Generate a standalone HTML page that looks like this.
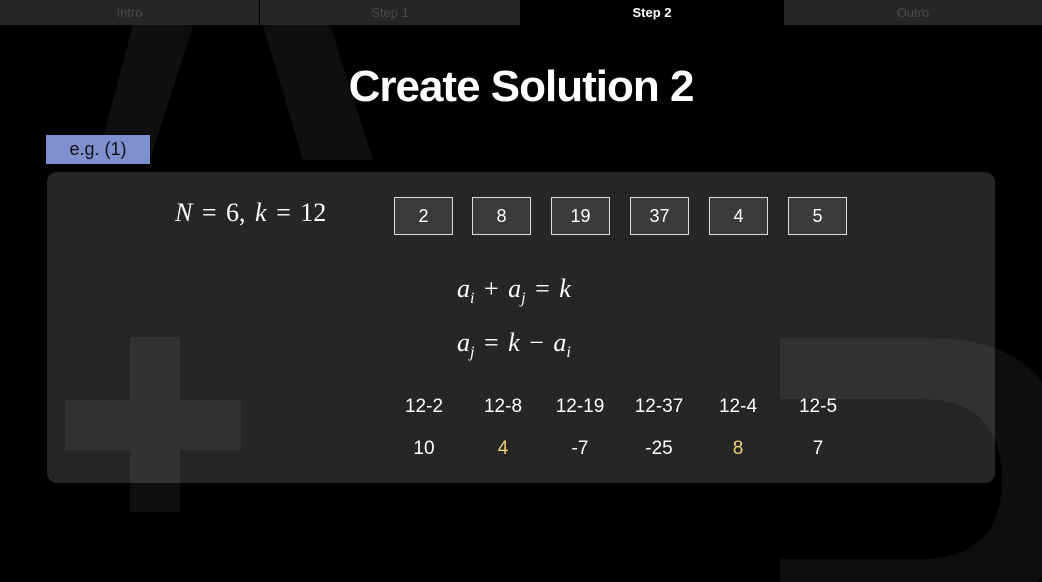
<!DOCTYPE html>
<html><head><style>
body{margin:0;width:1042px;height:582px;background:#000;overflow:hidden;position:relative;font-family:"Liberation Sans",sans-serif;color:#fff}
.a{position:absolute}
.tab{position:absolute;top:0;height:25px;line-height:25px;text-align:center;font-size:13px;color:#4a4a4a;background:#262626}
.box{position:absolute;top:197px;width:57px;height:36px;border:1.5px solid #ddd;background:#3b3b3b;text-align:center;line-height:36px;font-size:18px}
.n{position:absolute;width:60px;text-align:center;font-size:19px}
.m{font-family:"Liberation Serif",serif;font-style:italic;font-size:26px;position:absolute;word-spacing:3px}
</style></head><body>
<svg class="a" style="left:0;top:0" width="1042" height="582">
<polygon points="133,25 193,25 150,160 97,160" fill="#0f0f0f"/>
<polygon points="263,25 330,25 373,160 303,160" fill="#0f0f0f"/>
<rect x="130" y="337" width="50" height="175" fill="#0f0f0f"/>
<rect x="65" y="400" width="176" height="50" fill="#0f0f0f"/>
<path fill-rule="evenodd" fill="#0e0e0e" d="M780 338 H930 Q1070 338 1070 480 Q1070 620 930 620 H780 Z M780 399 H920 Q1002 399 1002 480 Q1002 559 920 559 H780 Z"/>
</svg>
<div class="tab" style="left:0;width:259px">Intro</div>
<div class="tab" style="left:260px;width:260px">Step 1</div>
<div class="tab" style="left:521px;width:262px;background:#000;color:#fff;font-weight:bold">Step 2</div>
<div class="tab" style="left:784px;width:258px">Outro</div>
<div class="a" style="left:0;top:62px;width:1042px;text-align:center;font-size:44px;font-weight:bold;letter-spacing:-1px">Create Solution 2</div>
<div class="a" style="left:46px;top:135px;width:104px;height:29px;background:#7f8fd0;color:#111;font-size:18px;text-align:center;line-height:29px">e.g. (1)</div>
<div class="a" style="left:47px;top:172px;width:948px;height:311px;background:rgba(255,255,255,0.15);border-radius:10px"></div>
<div class="m" style="left:175px;top:198px">N <span style="font-style:normal">= 6,</span> k <span style="font-style:normal">= 12</span></div>
<div class="box" style="left:394px">2</div>
<div class="box" style="left:472px">8</div>
<div class="box" style="left:551px">19</div>
<div class="box" style="left:630px">37</div>
<div class="box" style="left:709px">4</div>
<div class="box" style="left:788px">5</div>
<div class="m" style="left:457px;top:274px">a<sub style="font-size:16px">i</sub> <span style="font-style:normal">+</span> a<sub style="font-size:16px">j</sub> <span style="font-style:normal">=</span> k</div>
<div class="m" style="left:457px;top:328px">a<sub style="font-size:16px">j</sub> <span style="font-style:normal">=</span> k <span style="font-style:normal">−</span> a<sub style="font-size:16px">i</sub></div>
<div class="n" style="left:394px;top:396px">12-2</div>
<div class="n" style="left:473px;top:396px">12-8</div>
<div class="n" style="left:550px;top:396px">12-19</div>
<div class="n" style="left:629px;top:396px">12-37</div>
<div class="n" style="left:708px;top:396px">12-4</div>
<div class="n" style="left:788px;top:396px">12-5</div>
<div class="n" style="left:394px;top:438px">10</div>
<div class="n" style="left:473px;top:438px;color:#f0cf7a">4</div>
<div class="n" style="left:550px;top:438px">-7</div>
<div class="n" style="left:629px;top:438px">-25</div>
<div class="n" style="left:708px;top:438px;color:#f0cf7a">8</div>
<div class="n" style="left:788px;top:438px">7</div>
</body></html>
